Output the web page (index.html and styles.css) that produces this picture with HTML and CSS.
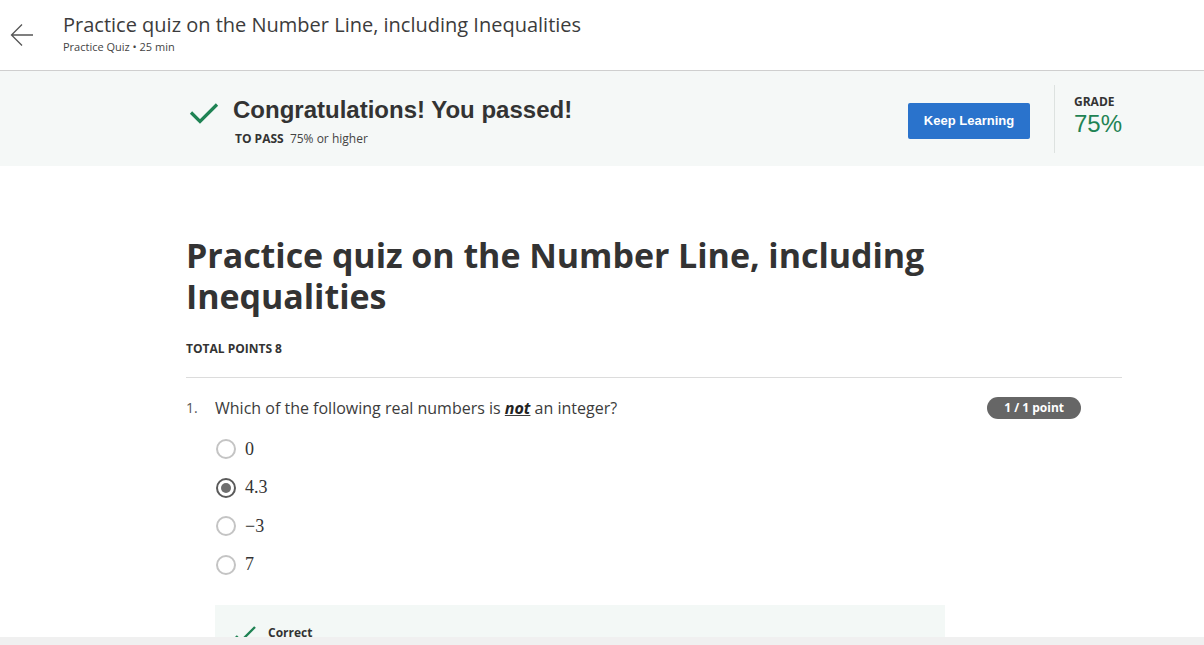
FILE: index.html
```html
<!DOCTYPE html>
<html>
<head>
<meta charset="utf-8">
<link rel="stylesheet" href="styles.css">
</head>
<body>
<header class="topbar">
  <svg class="back" width="24" height="24" viewBox="0 0 24 24"><path d="M23 12H1.5M12 1.5L1.5 12L12 22.5" fill="none" stroke="#555" stroke-width="1.3"/></svg>
  <div class="topbar-text">
    <div class="topbar-title">Practice quiz on the Number Line, including Inequalities</div>
    <div class="topbar-sub">Practice Quiz • 25 min</div>
  </div>
</header>
<section class="banner">
  <div class="banner-inner">
    <svg class="banner-check" width="30" height="22" viewBox="0 0 30 22"><path d="M2 10.5L11 19.5L28 2.5" fill="none" stroke="#1f8354" stroke-width="3.2"/></svg>
    <div class="banner-msg">
      <div class="banner-title">Congratulations! You passed!</div>
      <div class="banner-pass"><b>TO PASS</b>&nbsp; 75% or higher</div>
    </div>
    <button class="btn">Keep Learning</button>
    <div class="divider"></div>
    <div class="grade">
      <div class="grade-label">GRADE</div>
      <div class="grade-value">75%</div>
    </div>
  </div>
</section>
<main class="content">
  <h1 class="quiz-title">Practice quiz on the Number Line, including Inequalities</h1>
  <div class="total">TOTAL POINTS 8</div>
  <hr class="rule">
  <div class="question">
    <div class="q-num">1.</div>
    <div class="q-body">
      <div class="q-head">
        <div class="q-text">Which of the following real numbers is <u><b><i>not</i></b></u> an integer?</div>
        <span class="badge">1 / 1 point</span>
      </div>
      <ul class="options">
        <li class="opt"><span class="radio"></span><span class="math">0</span></li>
        <li class="opt"><span class="radio checked"></span><span class="math">4.3</span></li>
        <li class="opt"><span class="radio"></span><span class="math">−3</span></li>
        <li class="opt"><span class="radio"></span><span class="math">7</span></li>
      </ul>
      <div class="feedback">
        <svg class="fb-check" width="24" height="18" viewBox="0 0 24 18"><path d="M2 11L7 16L21 2" fill="none" stroke="#1f8354" stroke-width="2.4"/></svg>
        <span class="fb-text">Correct</span>
      </div>
    </div>
  </div>
</main>
<div class="hscroll"></div>
</body>
</html>
```
FILE: styles.css
```css
html, body {
  margin: 0;
  padding: 0;
  background: #fff;
  font-family: "Open Sans", "Liberation Sans", sans-serif;
  color: #333;
  overflow: hidden;
}
.topbar {
  height: 70px;
  border-bottom: 1px solid #cfcfcf;
  display: flex;
  align-items: flex-start;
  box-sizing: content-box;
}
.back {
  margin: 23px 0 0 10px;
}
.topbar-text {
  margin: 11px 0 0 29px;
}
.topbar-title {
  font-size: 20px;
  line-height: 27px;
  color: #3c3c3c;
}
.topbar-sub {
  margin-top: 1px;
  font-size: 11px;
  line-height: 16px;
  color: #444;
}
.banner {
  background: #f5f8f7;
  height: 95px;
}
.banner-inner {
  margin-left: 186px;
  width: 936px;
  height: 95px;
  display: flex;
  align-items: flex-start;
}
.banner-check {
  margin: 31px 0 0 3px;
}
.banner-msg {
  margin: 25px 0 0 14px;
  flex: 1;
}
.banner-title {
  font-family: "Liberation Sans", Arial, sans-serif;
  font-weight: bold;
  font-size: 24px;
  line-height: 28px;
  color: #333;
}
.banner-pass {
  margin: 7px 0 0 2px;
  font-size: 12px;
  line-height: 16px;
  color: #444;
}
.banner-pass b {
  color: #333;
}
.btn {
  margin-top: 32px;
  width: 122px;
  height: 36px;
  border: none;
  border-radius: 2px;
  background: #2a73cc;
  color: #fff;
  font-family: "Liberation Sans", Arial, sans-serif;
  font-weight: bold;
  font-size: 13px;
  padding: 0 0 2px 0;
}
.divider {
  margin: 14px 0 0 24px;
  width: 1px;
  height: 68px;
  background: #dde2e0;
}
.grade {
  margin: 23px 0 0 19px;
  width: 48px;
}
.grade-label {
  font-size: 12px;
  font-weight: bold;
  line-height: 16px;
  color: #333;
}
.grade-value {
  font-family: "Liberation Sans", Arial, sans-serif;
  font-size: 24px;
  line-height: 28px;
  color: #1f8354;
}
.content {
  margin-left: 186px;
  width: 936px;
  padding-top: 69px;
}
.quiz-title {
  margin: 0;
  font-size: 34px;
  letter-spacing: -0.05px;
  line-height: 41px;
  font-weight: bold;
  color: #333;
  max-width: 780px;
}
.total {
  margin-top: 24px;
  font-size: 12px;
  font-weight: bold;
  line-height: 16px;
  color: #333;
}
.rule {
  margin: 20px 0 0 0;
  border: none;
  border-top: 1px solid #dcdcdc;
  height: 0;
}
.question {
  display: flex;
  margin-top: 19px;
}
.q-num {
  width: 29px;
  font-size: 14px;
  line-height: 22px;
  color: #555;
}
.q-body {
  flex: 1;
}
.q-head {
  display: flex;
  justify-content: space-between;
  align-items: flex-start;
}
.q-text {
  font-size: 16px;
  line-height: 22px;
  color: #3c3c3c;
}
.q-text b {
  color: #222;
}
.badge {
  margin: 0 41px 0 0;
  background: #666;
  color: #fff;
  font-size: 12px;
  font-weight: bold;
  line-height: 22px;
  height: 22px;
  padding: 0 17px;
  border-radius: 11px;
}
.options {
  list-style: none;
  margin: 20px 0 0 1px;
  padding: 0;
  display: flex;
  flex-direction: column;
  gap: 18.5px;
}
.opt {
  display: flex;
  align-items: center;
  height: 20px;
}
.radio {
  width: 16px;
  height: 16px;
  border: 2px solid #c4c4c4;
  border-radius: 50%;
  box-sizing: content-box;
  display: flex;
  align-items: center;
  justify-content: center;
}
.radio.checked {
  border-color: #5a5a5a;
}
.radio.checked::after {
  content: "";
  width: 10px;
  height: 10px;
  border-radius: 50%;
  background: #6e6e6e;
}
.math {
  margin-left: 9px;
  font-family: "Liberation Serif", "DejaVu Serif", serif;
  font-size: 18px;
  color: #333;
}
.feedback {
  margin-top: 30px;
  width: 730px;
  height: 60px;
  background: #f3f8f6;
  display: flex;
  align-items: flex-start;
  padding: 20px 0 0 19px;
  box-sizing: border-box;
}
.fb-text {
  margin-left: 10px;
  font-size: 12px;
  font-weight: bold;
  line-height: 16px;
  color: #333;
}
.hscroll {
  position: fixed;
  left: 0;
  right: 0;
  bottom: 0;
  height: 8px;
  background: #f0f0f0;
}
```
